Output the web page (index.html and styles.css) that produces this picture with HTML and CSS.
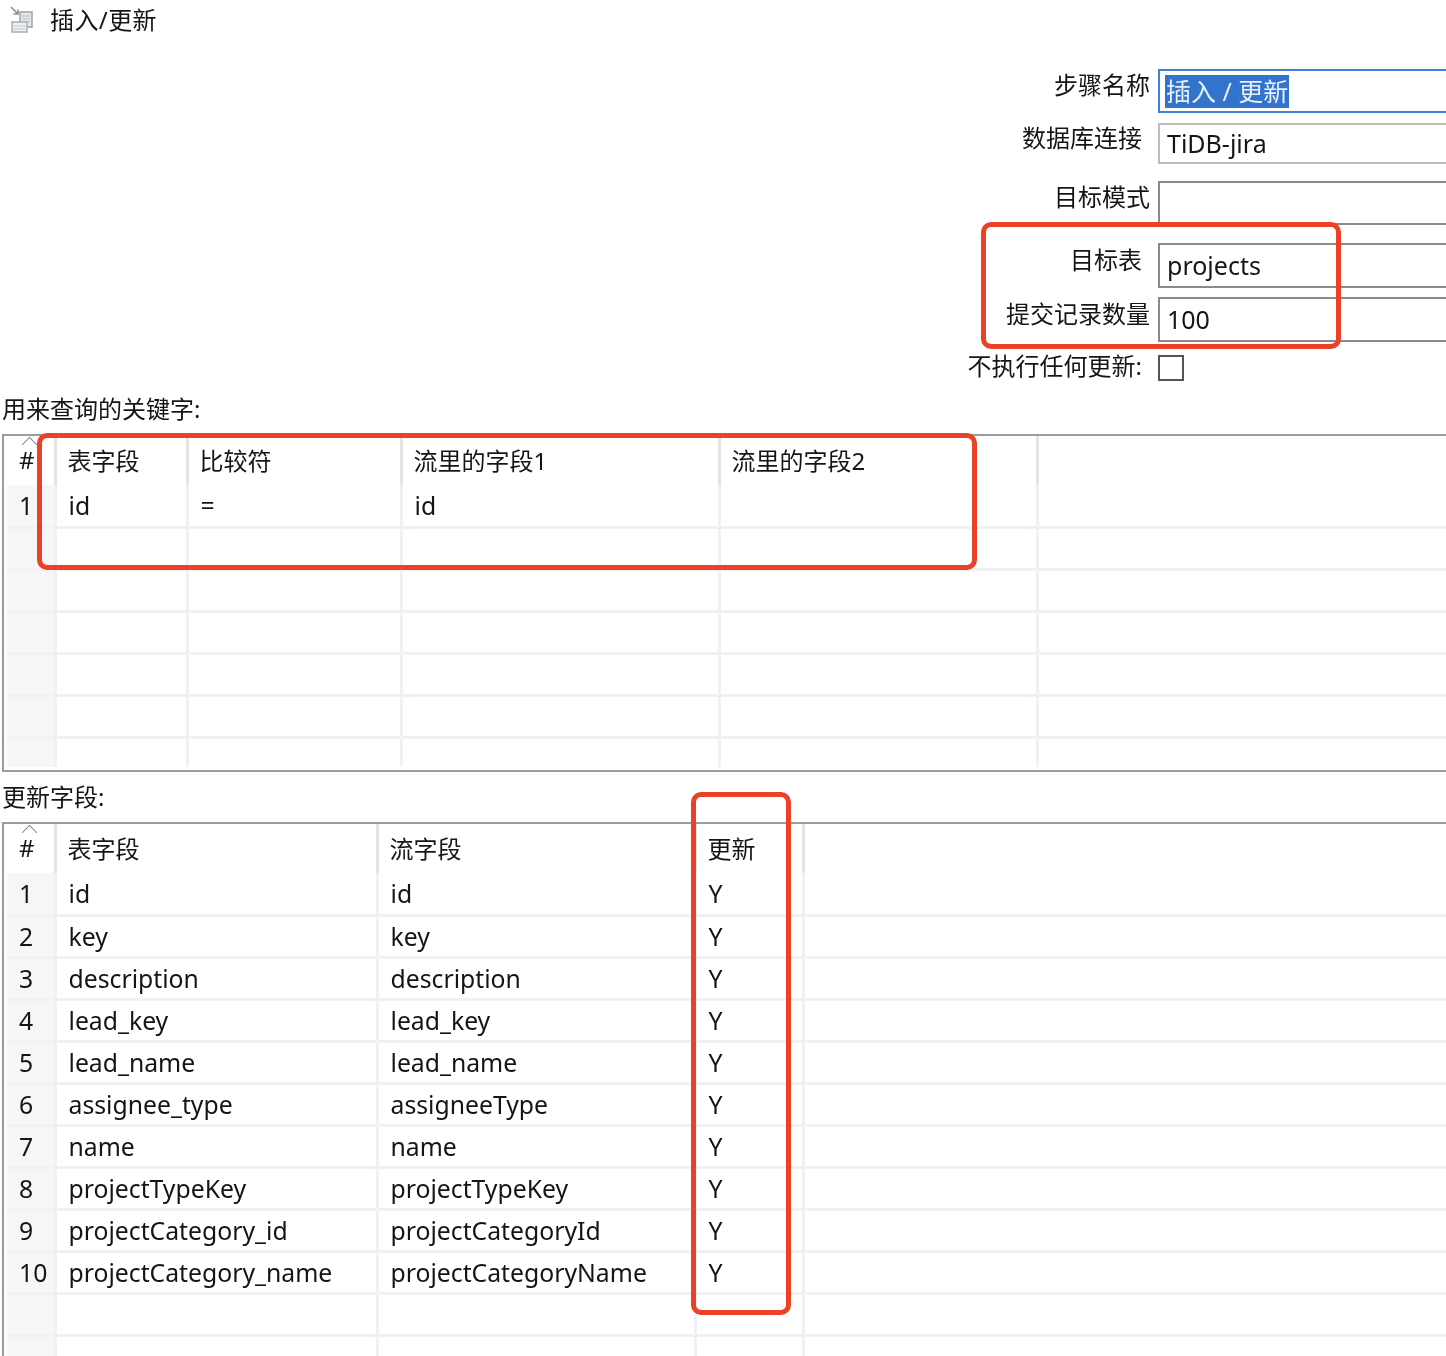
FILE: index.html
```html
<!DOCTYPE html>
<html lang="zh-CN">
<head>
    <meta charset="UTF-8">
    <title>插入/更新</title>
    <link rel="stylesheet" href="styles.css">
</head>
<body>
<div class="page">
    <div class="title-bar">
        <svg class="title-icon" width="26" height="28" viewBox="0 0 26 28">
            <path d="M11 6h12v15H11z" fill="#e4e8ec" stroke="#9aa3ab" stroke-width="1.5"/>
            <path d="M13 10h8M13 13h8M13 16h8" stroke="#b5bcc3" stroke-width="1.2"/>
            <path d="M3 16h15v10H3z" fill="#eef0f2" stroke="#a6adb4" stroke-width="1.5"/>
            <path d="M3 20h15M3 23h15" stroke="#c3c8cd" stroke-width="1.2"/>
            <path d="M2 1l7 7M9 3.500V8H4.500" fill="none" stroke="#8d8f92" stroke-width="1.6"/>
        </svg>
        <span class="title-text">插入/更新</span>
    </div>

    <div class="form">
        <div class="form-row row-name">
            <label class="form-label">步骤名称</label>
            <div class="field field-focus"><span class="selected">插入 / 更新</span></div>
        </div>
        <div class="form-row row-conn">
            <label class="form-label short">数据库连接</label>
            <div class="field field-light">TiDB-jira</div>
        </div>
        <div class="form-row row-schema">
            <label class="form-label">目标模式</label>
            <div class="field"></div>
        </div>
        <div class="form-row row-table">
            <label class="form-label short">目标表</label>
            <div class="field">projects</div>
        </div>
        <div class="form-row row-commit">
            <label class="form-label">提交记录数量</label>
            <div class="field">100</div>
        </div>
        <div class="form-row row-check">
            <label class="form-label short">不执行任何更新:</label>
            <div class="checkbox"></div>
        </div>
    </div>

    <div class="section-label label-keys">用来查询的关键字:</div>
    <div class="grid-box keys-box">
        <table class="grid keys-grid">
            <colgroup><col class="c-num"><col style="width:132px"><col style="width:214px"><col style="width:318px"><col style="width:318px"><col></colgroup>
            <tr class="head"><th class="num"><i class="sort"></i>#</th><th>表字段</th><th>比较符</th><th>流里的字段1</th><th>流里的字段2</th><th class="rest"></th></tr>
            <tr><td class="num">1</td><td>id</td><td>=</td><td>id</td><td></td><td class="rest"></td></tr>
            <tr><td class="num"></td><td></td><td></td><td></td><td></td><td class="rest"></td></tr>
            <tr><td class="num"></td><td></td><td></td><td></td><td></td><td class="rest"></td></tr>
            <tr><td class="num"></td><td></td><td></td><td></td><td></td><td class="rest"></td></tr>
            <tr><td class="num"></td><td></td><td></td><td></td><td></td><td class="rest"></td></tr>
            <tr><td class="num"></td><td></td><td></td><td></td><td></td><td class="rest"></td></tr>
            <tr class="last"><td class="num"></td><td></td><td></td><td></td><td></td><td class="rest"></td></tr>
        </table>
    </div>

    <div class="section-label label-update">更新字段:</div>
    <div class="grid-box update-box">
        <table class="grid update-grid">
            <colgroup><col class="c-num"><col style="width:322px"><col style="width:318px"><col style="width:108px"><col></colgroup>
            <tr class="head"><th class="num"><i class="sort"></i>#</th><th>表字段</th><th>流字段</th><th>更新</th><th class="rest"></th></tr>
            <tr><td class="num">1</td><td>id</td><td>id</td><td>Y</td><td class="rest"></td></tr>
            <tr><td class="num">2</td><td>key</td><td>key</td><td>Y</td><td class="rest"></td></tr>
            <tr><td class="num">3</td><td>description</td><td>description</td><td>Y</td><td class="rest"></td></tr>
            <tr><td class="num">4</td><td>lead_key</td><td>lead_key</td><td>Y</td><td class="rest"></td></tr>
            <tr><td class="num">5</td><td>lead_name</td><td>lead_name</td><td>Y</td><td class="rest"></td></tr>
            <tr><td class="num">6</td><td>assignee_type</td><td>assigneeType</td><td>Y</td><td class="rest"></td></tr>
            <tr><td class="num">7</td><td>name</td><td>name</td><td>Y</td><td class="rest"></td></tr>
            <tr><td class="num">8</td><td>projectTypeKey</td><td>projectTypeKey</td><td>Y</td><td class="rest"></td></tr>
            <tr><td class="num">9</td><td>projectCategory_id</td><td>projectCategoryId</td><td>Y</td><td class="rest"></td></tr>
            <tr><td class="num">10</td><td>projectCategory_name</td><td>projectCategoryName</td><td>Y</td><td class="rest"></td></tr>
            <tr><td class="num"></td><td></td><td></td><td></td><td class="rest"></td></tr>
            <tr class="last"><td class="num"></td><td></td><td></td><td></td><td class="rest"></td></tr>
        </table>
    </div>

    <!-- red marks drawn over the screenshot -->
    <div class="mark mark-form"></div>
    <div class="mark mark-keys"></div>
    <div class="mark mark-update"></div>
</div>
</body>
</html>
```

FILE: styles.css
```css
* {
    box-sizing: border-box;
}

html, body {
    margin: 0;
    padding: 0;
    background: #fff;
}

.page {
    position: relative;
    width: 1446px;
    height: 1356px;
    overflow: hidden;
    font-family: "Noto Sans", "Noto Sans CJK SC", sans-serif;
    font-size: 24px;
    color: #151515;
    filter: blur(0.4px);  /* the reference is an upscaled screenshot */
}

/* Title */
.title-bar {
    display: flex;
    align-items: center;
    height: 40px;
    padding-left: 9px;
    gap: 15px;
}

.title-icon {
    flex: none;
}

.title-text {
    padding-bottom: 4px;
    letter-spacing: 0.4px;
}

/* Form */
.form {
    margin-top: 29px;
}

.form-row {
    display: flex;
    align-items: center;
}

.form-label {
    width: 1150px;
    margin-right: 8px;
    padding-bottom: 15px;
    text-align: right;
    white-space: nowrap;
}

.form-label.short {
    padding-right: 8px;
}

.field {
    flex: 1;
    height: 100%;
    padding-left: 7px;
    border: 2px solid #8a8a8a;
    border-right: none;
    line-height: 40px;
    font-size: 25px;
}

.field-focus {
    border-color: #3c82d8;
    padding-left: 5px;
}

.field-light {
    border-color: #bdbdbd;
    line-height: 36px;
}

.selected {
    display: inline-block;
    height: 33px;
    line-height: 33px;
    padding: 0 1px;
    background: #3273cc;
    color: #e8f0fa;
}

.row-name { height: 44px; }
.row-conn { height: 41px; margin-top: 10px; }
.row-schema { height: 44px; margin-top: 17px; }
.row-table { height: 45px; margin-top: 18px; }
.row-commit { height: 45px; margin-top: 9px; }
.row-check { height: 26px; margin-top: 13px; }

.row-check .form-label {
    padding-bottom: 8px;
}

.checkbox {
    width: 26px;
    height: 26px;
    border: 2px solid #555;
}

/* Tables */
.section-label {
    height: 28px;
    padding-left: 2px;
    line-height: 28px;
    white-space: nowrap;
}

.label-keys {
    margin-top: 14px;
}

.label-update {
    margin-top: 11px;
}

.grid-box {
    width: 1500px;
    margin-left: 2px;
    padding-left: 3px;
    border: 2px solid #9a9a9f;
    border-right: none;
}

.keys-box {
    height: 338px;
    margin-top: 11px;
}

.update-box {
    height: 560px;
    margin-top: 11px;
    border-bottom: none;
}

.grid {
    width: 100%;
    table-layout: fixed;
    border-collapse: collapse;
}

.c-num {
    width: 48px;
}

.grid th, .grid td {
    height: 42px;
    padding: 0 0 0 11px;
    border-right: 3px solid #eef1f7;
    border-bottom: 3px solid #f1f1f3;
    font-weight: normal;
    font-size: 24.75px;
    text-align: left;
    white-space: nowrap;
    overflow: hidden;
}

.grid td {
    padding-top: 1px;
    padding-left: 12px;
}

.grid .head th {
    height: 49px;
    padding-bottom: 2px;
    border-bottom: none;
    border-right-color: #e4e4e4;
    font-size: 24px;
}

.grid .last td {
    border-bottom: none;
    height: 30px;
}

.grid .num {
    position: relative;
    padding-left: 12px;
    background: #f6f6f6;
    border-right-color: #eef1f7;
}

.grid .head .num {
    background: #fff;
}

.grid .rest {
    border-right: none;
    padding: 0;
}

.grid .head .rest {
    border-right: none;
}

/* little sort arrow above the # */
.sort {
    position: absolute;
    left: 17px;
    top: 3px;
    width: 11px;
    height: 11px;
    border-top: 1.500px solid #888;
    border-left: 1.500px solid #888;
    transform: rotate(45deg);
}

/* Red marks */
.mark {
    position: absolute;
    border: 5px solid #ea4128;
    border-radius: 10px;
}

.mark-form {
    left: 981px;
    top: 222px;
    width: 360px;
    height: 127px;
}

.mark-keys {
    left: 37px;
    top: 433px;
    width: 940px;
    height: 137px;
}

.mark-update {
    left: 691px;
    top: 792px;
    width: 100px;
    height: 523px;
}
```
